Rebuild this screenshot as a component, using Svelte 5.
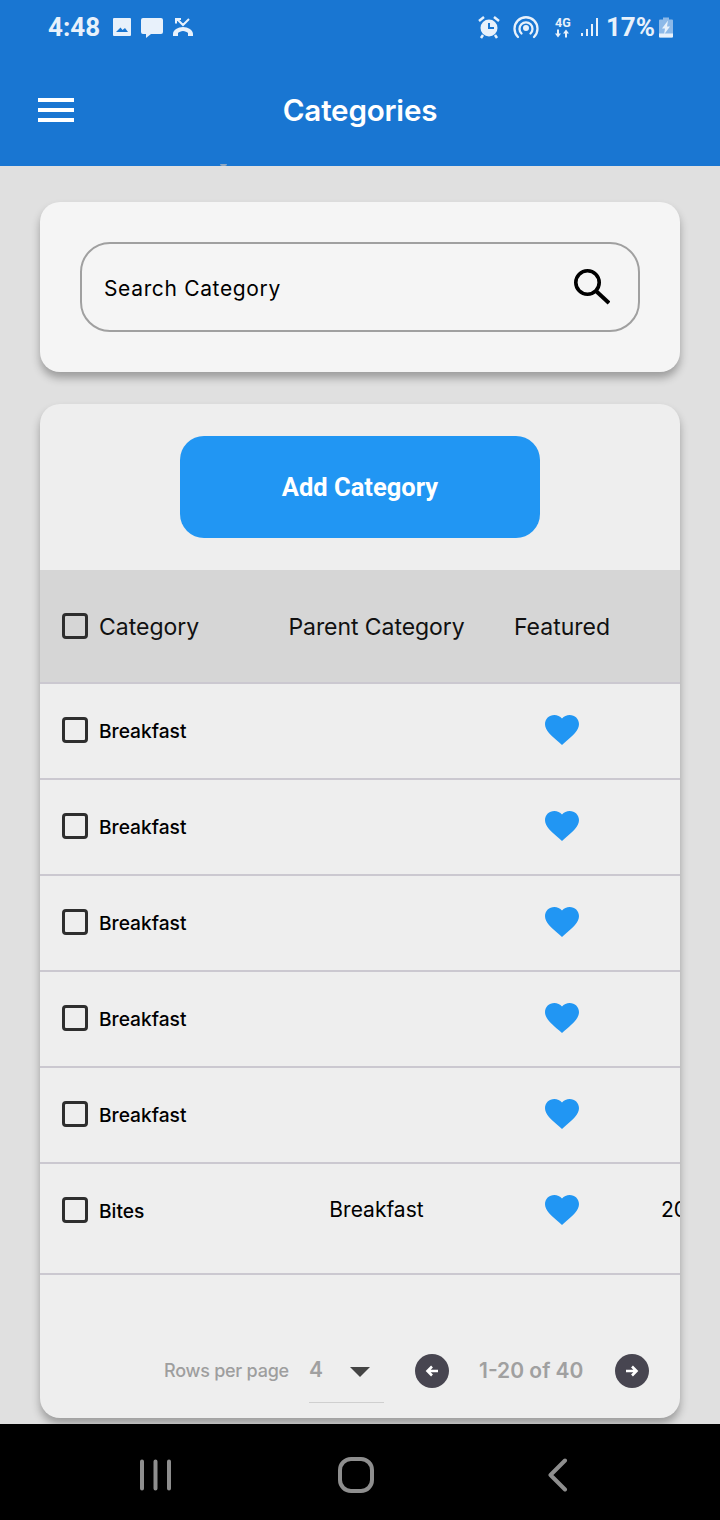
<script>
  const rows = [
    { name: 'Breakfast', parent: '', date: '' },
    { name: 'Breakfast', parent: '', date: '' },
    { name: 'Breakfast', parent: '', date: '' },
    { name: 'Breakfast', parent: '', date: '' },
    { name: 'Breakfast', parent: '', date: '' },
    { name: 'Bites', parent: 'Breakfast', date: '20', tall: true }
  ];
</script>

<div class="phone">
  <header class="header">
    <div class="status">
      <div class="status-left">
        <span class="time">4:48</span>
        <svg class="ic" width="20" height="20" viewBox="0 0 20 20"><path fill="#e8f1fb" fill-rule="evenodd" d="M2 1h16a1 1 0 0 1 1 1v16a1 1 0 0 1-1 1H2a1 1 0 0 1-1-1V2a1 1 0 0 1 1-1Zm2 14h12l-3-4-2.500 2-2-2.500Z"/></svg>
        <svg class="ic" width="24" height="24" viewBox="0 0 24 24"><path fill="#e8f1fb" d="M3 1h18a2 2 0 0 1 2 2v12a2 2 0 0 1-2 2H11l-5 4v-4H3a2 2 0 0 1-2-2V3a2 2 0 0 1 2-2Z"/></svg>
        <svg class="ic" width="22" height="20" viewBox="0 0 22 20"><path fill="none" stroke="#e8f1fb" stroke-width="2" d="M5 2l6 6 6-6M4 1v5.500M3.500 2H9"/><path fill="#e8f1fb" d="M1 17c0-4 5-7 10-7s10 3 10 7v2h-5v-3c-1-1-3-2-5-2s-4 1-5 2v3H1Z"/></svg>
      </div>
      <div class="status-right">
        <svg class="alarm" width="24" height="24" viewBox="0 0 24 24"><circle cx="12" cy="13" r="8.500" fill="#e8f1fb"/><path stroke="#e8f1fb" stroke-width="2.500" d="M2 6l5-4M22 6l-5-4M6 20l-2 3M18 20l2 3"/><path fill="none" stroke="#1976d2" stroke-width="2" d="M12 8v5h5"/></svg>
        <svg class="cast" width="28" height="26" viewBox="0 0 28 26"><circle cx="14" cy="14" r="3" fill="#e8f1fb"/><path fill="none" stroke="#e8f1fb" stroke-width="2.300" stroke-linecap="round" d="M6 23a11.500 11.500 0 1 1 16 0M9.500 19.500a6.500 6.500 0 1 1 9 0"/></svg>
        <span class="net"><span>4G</span><svg width="15" height="9" viewBox="0 0 15 8"><path fill="#e8f1fb" d="M3 8 0 4h2V0h2v4h2ZM11 0l3 4h-2v4h-2V4H8Z"/></svg></span>
        <svg class="signal" width="18" height="20" viewBox="0 0 18 20"><path fill="#e8f1fb" d="M0 16h2v3H0zM5 12h2v7H5zM10 7h2v12h-2zM15 1h2v18h-2z"/></svg>
        <span class="pct">17%</span>
        <svg class="bat" width="14" height="21" viewBox="0 0 14 20"><path fill="#8db9e8" d="M4 0h6v2h3a1 1 0 0 1 1 1v16a1 1 0 0 1-1 1H1a1 1 0 0 1-1-1V3a1 1 0 0 1 1-1h3Z"/><path fill="#e8f1fb" d="M0 16h14v3a1 1 0 0 1-1 1H1a1 1 0 0 1-1-1Z"/><path fill="#e8f1fb" d="M9 3 3 11h3l-1 6 6-8H8Z"/></svg>
      </div>
    </div>
    <div class="appbar">
      <div class="burger"><i></i><i></i><i></i></div>
      <h1>Categories</h1>
    </div>
    <span class="speck"></span>
  </header>

  <main class="main">
    <section class="card search-card">
      <div class="search">
        <span>Search Category</span>
        <svg width="40" height="40" viewBox="0 0 40 40"><circle cx="17.500" cy="15.500" r="11.700" fill="none" stroke="#000" stroke-width="3.600"/><path d="M26 24l13 12" stroke="#000" stroke-width="4"/></svg>
      </div>
    </section>

    <section class="card table-card">
      <div class="btn-wrap"><button class="add">Add Category</button></div>
      <div class="row head">
        <div class="c1"><span class="check"></span><span class="htext">Category</span></div>
        <div class="c2 htext parent-head">Parent Category</div>
        <div class="c3 htext">Featured</div>
        <div class="c4"></div>
      </div>
      {#each rows as r}
        <div class="row body" class:tall={r.tall}>
          <div class="c1"><span class="check"></span><span class="name">{r.name}</span></div>
          <div class="c2">{r.parent}</div>
          <div class="c3">
            <svg width="34" height="30" viewBox="2 3 20 18.350" preserveAspectRatio="none"><path fill="#2196f3" d="M12 21.350l-1.450-1.320C5.400 15.360 2 12.280 2 8.500 2 5.420 4.420 3 7.500 3c1.740 0 3.410.81 4.500 2.090C13.090 3.810 14.760 3 16.500 3 19.580 3 22 5.420 22 8.500c0 3.780-3.400 6.860-8.550 11.540L12 21.350z"/></svg>
          </div>
          <div class="c4">{r.date}</div>
        </div>
      {/each}
      <div class="pager">
        <span class="rpp">Rows per page</span>
        <div class="select">
          <span class="four">4</span>
          <i class="tri"></i>
        </div>
        <span class="round">
          <svg width="14" height="12" viewBox="0 0 14 12"><path fill="none" stroke="#fff" stroke-width="2.600" d="M13 6H2.500M7 1.500 2.500 6 7 10.500"/></svg>
        </span>
        <span class="range">1-20 of 40</span>
        <span class="round">
          <svg width="14" height="12" viewBox="0 0 14 12"><path fill="none" stroke="#fff" stroke-width="2.600" d="M1 6h10.500M7 1.500 11.500 6 7 10.500"/></svg>
        </span>
      </div>
    </section>
  </main>

  <nav class="nav">
    <svg width="34" height="34" viewBox="0 0 34 34"><path stroke="#8e8e8e" stroke-width="4" stroke-linecap="round" d="M3 3.500v27M16.500 3.500v27M30 3.500v27"/></svg>
    <svg class="home" width="36" height="36" viewBox="0 0 36 36"><rect x="2" y="2" width="32" height="32" rx="11" fill="none" stroke="#8e8e8e" stroke-width="4"/></svg>
    <svg class="back" width="22" height="34" viewBox="0 0 22 34"><path fill="none" stroke="#8e8e8e" stroke-width="4" stroke-linecap="round" stroke-linejoin="round" d="M17 2.500 2.500 17 17 31.500"/></svg>
  </nav>
</div>

<style>
  :global(body) { margin: 0; background: #e0e0e0; }
  .phone { width: 720px; height: 1520px; display: flex; flex-direction: column; overflow: hidden; background: #e0e0e0; font-family: Inter, sans-serif; }
  .header { height: 166px; flex: none; background: #1976d2; color: #fff; position: relative; }
  .speck { position: absolute; left: 220px; bottom: 0; width: 7px; height: 2px; border-radius: 0 0 4px 4px; background: #8fa8c2; }
  .status { height: 56px; display: flex; align-items: center; justify-content: space-between; padding: 0 47px 2px 48px; color: #e8f1fb; font-family: Roboto, sans-serif; font-weight: 700; box-sizing: border-box; }
  .status-left, .status-right { display: flex; align-items: center; }
  .time { font-size: 26px; line-height: 30px; margin-right: 12px; }
  .status-left .ic { margin-right: 8px; }
  .status-left .ic:nth-of-type(2) { margin-right: 8px; margin-top: 3px; }
  .alarm { margin-right: 11px; }
  .cast { margin-right: 15px; }
  .net { width: 16px; display: flex; flex-direction: column; align-items: center; font-size: 12.500px; line-height: 12px; margin-right: 10px; font-weight: 700; }
  .signal { margin-right: 7px; }
  .pct { font-size: 26px; line-height: 30px; margin-right: 4px; }
  .appbar { height: 110px; position: relative; display: flex; align-items: center; justify-content: center; padding-bottom: 2px; box-sizing: border-box; }
  .appbar h1 { margin: 0; font-size: 29.600px; line-height: 36px; font-weight: 600; letter-spacing: -0.2px; }
  .burger { position: absolute; left: 38px; top: 42px; width: 36px; display: flex; flex-direction: column; gap: 6px; }
  .burger i { height: 4px; background: #fff; display: block; }

  .main { height: 1258px; flex: none; box-sizing: border-box; padding: 36px 40px 0; display: flex; flex-direction: column; gap: 32px; }
  .card { border-radius: 20px; box-shadow: 0 6px 9px rgba(0,0,0,.3); overflow: hidden; flex: none; }
  .search-card { height: 170px; background: #f5f5f5; box-sizing: border-box; padding: 40px; }
  .search { height: 90px; box-sizing: border-box; border: 2px solid #a0a0a0; border-radius: 30px; display: flex; align-items: center; justify-content: space-between; padding: 0 28px 0 22px; font-size: 21px; letter-spacing: .65px; color: #000; }
  .search span { margin-top: 2px; }
  .table-card { height: 1014px; background: #eee; display: flex; flex-direction: column; }
  .btn-wrap { height: 166px; flex: none; box-sizing: border-box; padding-top: 32px; display: flex; justify-content: center; }
  .add { width: 360px; height: 102px; border: 0; border-radius: 24px; background: #2196f3; color: #fff; font-family: Roboto, sans-serif; font-weight: 700; font-size: 25.500px; padding: 0; }
  .row { display: grid; grid-template-columns: 233px 207px 164px 36px; flex: none; box-sizing: border-box; border-bottom: 2px solid #cbc8d0; color: #000; }
  .head { height: 114px; background: #d6d6d6; align-items: center; font-size: 23px; color: #111; }
  .htext { margin-top: 2px; }
  .parent-head { letter-spacing: -0.07px; }
  .body { height: 96px; align-items: center; font-size: 21px; padding-bottom: 2px; }
  .body.tall { height: 111px; padding-bottom: 18px; }
  .tall .name { margin-top: 3px; }
  .c1 { display: flex; align-items: center; gap: 11px; padding-left: 22px; white-space: nowrap; }
  .c2, .c3 { display: flex; justify-content: center; white-space: nowrap; }
  .c4 { padding-left: 17px; white-space: nowrap; overflow: hidden; }
  .name { font-weight: 500; font-size: 19.200px; margin-top: 1px; }
  .check { width: 26px; height: 26px; box-sizing: border-box; border: 3px solid #2e2e2e; border-radius: 4px; flex: none; }
  .head .check { margin-top: -1px; }
  .pager { flex: 1; display: flex; align-items: flex-start; padding: 79px 0 0 124px; color: #9e9e9e; font-weight: 600; }
  .rpp { font-size: 18px; line-height: 22px; font-weight: 500; margin-top: 6px; width: 125px; white-space: nowrap; margin-right: 20px; letter-spacing: -.25px; }
  .select { width: 75px; height: 49px; box-sizing: border-box; position: relative; border-bottom: 1px solid #cfcfcf; font-size: 21px; line-height: 26px; margin-right: 31px; color: #a0a0a0; }
  .four { position: relative; top: 3px; }
  .tri { position: absolute; left: 41px; top: 13px; width: 0; height: 0; border-left: 10px solid transparent; border-right: 10px solid transparent; border-top: 10px solid #444; }
  .round { width: 34px; height: 34px; border-radius: 50%; background: #474550; display: flex; align-items: center; justify-content: center; flex: none; }
  .range { width: 105px; font-size: 21px; line-height: 34px; white-space: nowrap; margin: 0 31px 0 30px; color: #a0a0a0; }
  .nav { height: 96px; flex: none; background: #000; display: flex; align-items: center; box-sizing: border-box; padding: 6px 0 0 139px; }
  .home { margin-left: 165px; }
  .back { margin-left: 174px; }
</style>
